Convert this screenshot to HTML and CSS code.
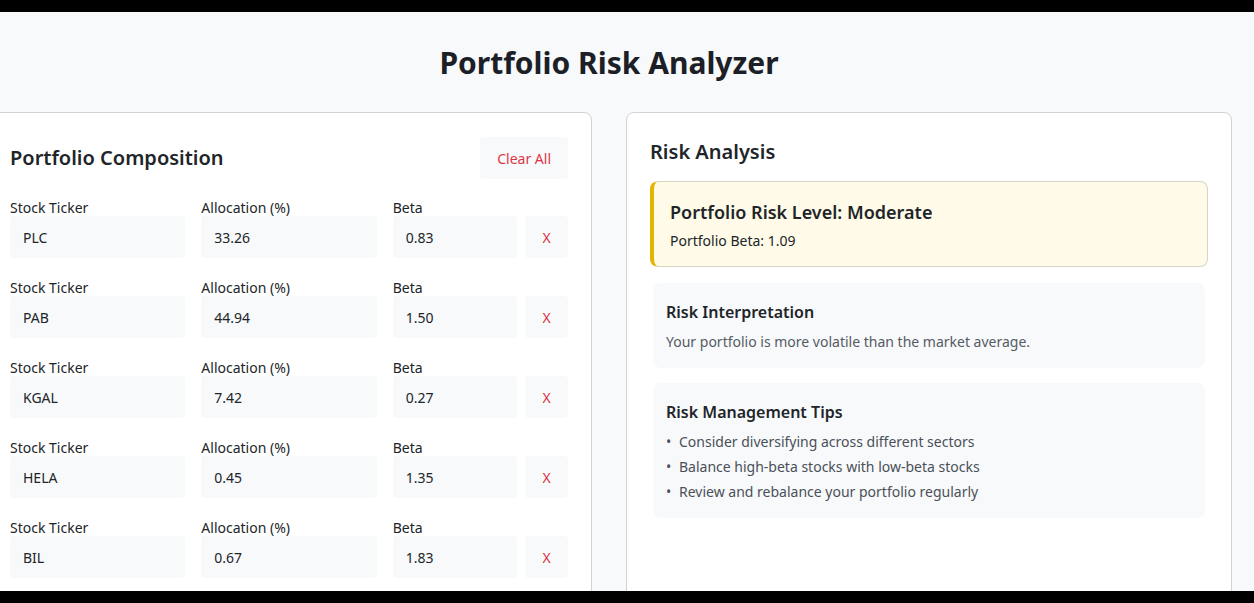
FILE: index.html
```html
<!DOCTYPE html>
<html lang="en">
<head>
	<meta charset="UTF-8">
	<meta name="viewport" content="width=device-width, initial-scale=1.0">
	<title>Portfolio Risk Analyzer</title>
	<link rel="stylesheet" href="styles.css">
</head>
<body>
	<div class="bar"></div>
	<div class="page">
		<div class="container">
			<h1 class="title">Portfolio Risk Analyzer</h1>
			<div class="columns">
				<div class="card">
					<div class="card-head">
						<h2>Portfolio Composition</h2>
						<button class="btn-clear">Clear All</button>
					</div>
					<div class="stock">
						<div class="field"><label>Stock Ticker</label><input value="PLC"></div>
						<div class="field"><label>Allocation (%)</label><input value="33.26"></div>
						<div class="field"><label>Beta</label><div class="beta-row"><input value="0.83"><button class="btn-x">X</button></div></div>
					</div>
					<div class="stock">
						<div class="field"><label>Stock Ticker</label><input value="PAB"></div>
						<div class="field"><label>Allocation (%)</label><input value="44.94"></div>
						<div class="field"><label>Beta</label><div class="beta-row"><input value="1.50"><button class="btn-x">X</button></div></div>
					</div>
					<div class="stock">
						<div class="field"><label>Stock Ticker</label><input value="KGAL"></div>
						<div class="field"><label>Allocation (%)</label><input value="7.42"></div>
						<div class="field"><label>Beta</label><div class="beta-row"><input value="0.27"><button class="btn-x">X</button></div></div>
					</div>
					<div class="stock">
						<div class="field"><label>Stock Ticker</label><input value="HELA"></div>
						<div class="field"><label>Allocation (%)</label><input value="0.45"></div>
						<div class="field"><label>Beta</label><div class="beta-row"><input value="1.35"><button class="btn-x">X</button></div></div>
					</div>
					<div class="stock">
						<div class="field"><label>Stock Ticker</label><input value="BIL"></div>
						<div class="field"><label>Allocation (%)</label><input value="0.67"></div>
						<div class="field"><label>Beta</label><div class="beta-row"><input value="1.83"><button class="btn-x">X</button></div></div>
					</div>
				</div>
				<div class="card">
					<h2 class="analysis-title">Risk Analysis</h2>
					<div class="risk-level">
						<h3>Portfolio Risk Level: Moderate</h3>
						<p>Portfolio Beta: 1.09</p>
					</div>
					<div class="info-box">
						<h4>Risk Interpretation</h4>
						<p>Your portfolio is more volatile than the market average.</p>
					</div>
					<div class="info-box">
						<h4>Risk Management Tips</h4>
						<ul>
							<li>Consider diversifying across different sectors</li>
							<li>Balance high-beta stocks with low-beta stocks</li>
							<li>Review and rebalance your portfolio regularly</li>
						</ul>
					</div>
				</div>
			</div>
		</div>
	</div>
	<div class="bar"></div>
</body>
</html>
```
FILE: styles.css
```css
body {
	margin: 0;
	background: #000;
	font-family: 'Noto Sans', 'Open Sans', sans-serif;
	font-size: 14px;
	color: #212529;
}
.bar { height: 12px; background: #000; }
.page {
	height: 579px;
	overflow: hidden;
	background: #f8f9fb;
}
.container { margin: 0 22px 0 -14px; }
.title {
	margin: 0;
	padding: 30px 0 29px;
	text-align: center;
	font-size: 30px;
	line-height: 41px;
	font-weight: 700;
	color: #1c1f26;
}
.columns {
	display: grid;
	grid-template-columns: 1fr 1fr;
	gap: 34px;
}
.card {
	background: #fff;
	border: 1px solid #cfd2d6;
	border-radius: 8px;
	padding: 24px 23px 23px;
	height: 560px;
}
.card-head {
	display: flex;
	justify-content: space-between;
	align-items: center;
	margin-bottom: 20px;
}
.card h2 {
	margin: 0;
	font-size: 20px;
	font-weight: 600;
	line-height: 30px;
}
.btn-clear {
	font: inherit;
	color: #dc3545;
	background: #f8f9fa;
	border: none;
	border-radius: 4px;
	height: 42px;
	padding: 0 17px;
}
.stock {
	display: grid;
	grid-template-columns: 1fr 1fr 1fr;
	gap: 16px;
	margin-bottom: 21px;
}
.field label {
	display: block;
	line-height: 17px;
	color: #212529;
}
.field input {
	display: block;
	width: 100%;
	box-sizing: border-box;
	height: 42px;
	padding: 0 13px;
	font: inherit;
	color: #212529;
	background: #f8f9fa;
	border: none;
	border-radius: 4px;
}
.beta-row {
	display: flex;
	gap: 8px;
}
.beta-row input { flex: 1; min-width: 0; }
.btn-x {
	flex: none;
	width: 43px;
	height: 42px;
	font: inherit;
	color: #dc3545;
	background: #f8f9fa;
	border: none;
	border-radius: 4px;
}
.analysis-title { margin-bottom: 14px !important; }
.risk-level {
	background: #fffbe8;
	border: 1px solid #d8d4c0;
	border-left: 4px solid #e6b400;
	border-radius: 8px;
	padding: 17px 16px 15px;
	margin-bottom: 16px;
}
.risk-level h3 {
	margin: 0 0 4px;
	font-size: 18px;
	font-weight: 600;
	line-height: 27px;
}
.risk-level p { margin: 0; line-height: 21px; }
.info-box {
	background: #f8f9fb;
	border-radius: 8px;
	padding: 17px 13px 16px;
	margin: 0 3px 15px;
}
.info-box h4 {
	margin: 0 0 7px;
	font-size: 16px;
	font-weight: 600;
	line-height: 24px;
}
.info-box p { margin: 0; line-height: 21px; color: #555b63; }
.info-box ul { margin: 0; padding: 0; list-style: none; }
.info-box li {
	line-height: 21px;
	margin-bottom: 4px;
	color: #4a5058;
}
.info-box li:last-child { margin-bottom: 0; }
.info-box li::before {
	content: "\2022";
	display: inline-block;
	width: 13px;
}
```
